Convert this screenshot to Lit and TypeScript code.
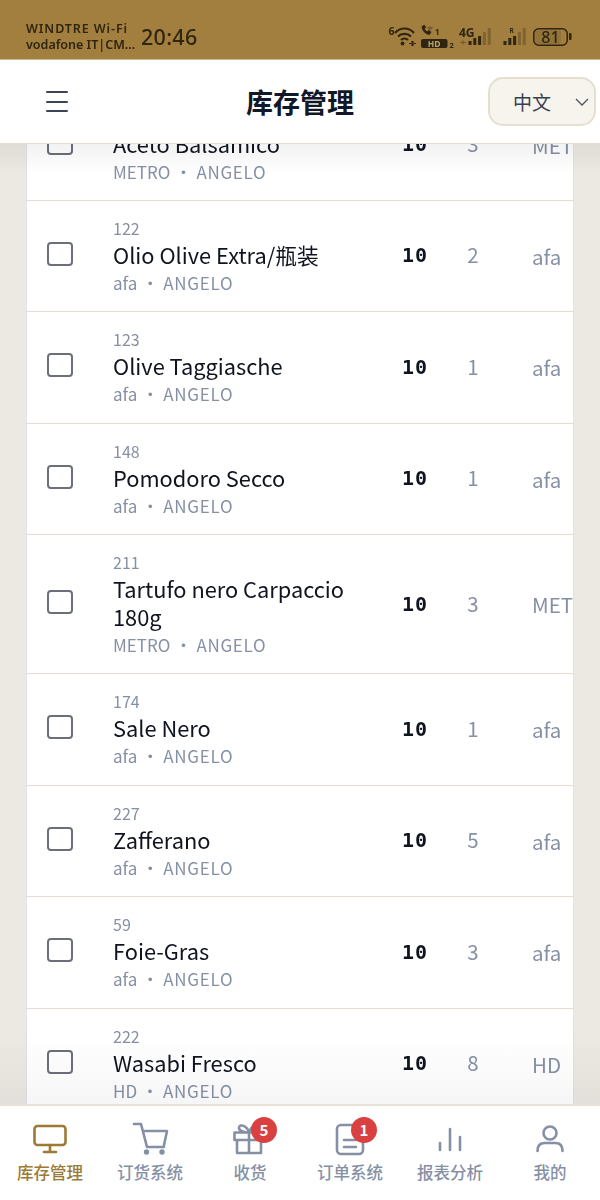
import { LitElement, html, css, svg } from "lit";
import { customElement } from "lit/decorators.js";

interface Item { id: string; name: string; qty: string; n: string; sup: string; }
const items: Item[] = [
  { id: "121", name: "Aceto Balsamico", qty: "10", n: "3", sup: "METRO" },
  { id: "122", name: "Olio Olive Extra/瓶装", qty: "10", n: "2", sup: "afa" },
  { id: "123", name: "Olive Taggiasche", qty: "10", n: "1", sup: "afa" },
  { id: "148", name: "Pomodoro Secco", qty: "10", n: "1", sup: "afa" },
  { id: "211", name: "Tartufo nero Carpaccio 180g", qty: "10", n: "3", sup: "METRO" },
  { id: "174", name: "Sale Nero", qty: "10", n: "1", sup: "afa" },
  { id: "227", name: "Zafferano", qty: "10", n: "5", sup: "afa" },
  { id: "59", name: "Foie-Gras", qty: "10", n: "3", sup: "afa" },
  { id: "222", name: "Wasabi Fresco", qty: "10", n: "8", sup: "HD" },
  { id: "230", name: "Tobiko", qty: "10", n: "2", sup: "HD" },
];

const navIcons = {
  monitor: svg`<rect x="1.500" y="4" width="31" height="19" rx="3"/><path d="M17 23v7M11 30h12"/>`,
  cart: svg`<path d="M1 2h7l6 23h17M10 9h24l-3 14"/><circle cx="13.500" cy="30" r="2.700" class="fill"/><circle cx="29" cy="30" r="2.700" class="fill"/>`,
  gift: svg`<path d="M1.500 10.500h29v7.500h-29zM4 18v13h24V18M16 10.500V31M16 10.500c-2-7-9-9-10-5-.7 3 5 5 10 5 5 0 10.700-2 10-5-1-4-8-2-10 5"/>`,
  doc: svg`<rect x="4" y="3" width="26" height="29" rx="4"/><path d="M11 18h12M11 25h12"/>`,
  bars: svg`<path d="M7 28v-7M17 28V7M27 28V15"/>`,
  user: svg`<circle cx="17" cy="11" r="6.500"/><path d="M4.500 29c0-6 3-8 7-8h11c4 0 7 2 7 8"/>`,
};

const nav: { icon: keyof typeof navIcons; label: string; badge?: string; active?: boolean }[] = [
  { icon: "monitor", label: "库存管理", active: true },
  { icon: "cart", label: "订货系统" },
  { icon: "gift", label: "收货", badge: "5" },
  { icon: "doc", label: "订单系统", badge: "1" },
  { icon: "bars", label: "报表分析" },
  { icon: "user", label: "我的" },
];

const DK = "#2f2510";
const levels = [4, 7, 9, 13, 17];
const signal = (x: number, lit: number) =>
  levels.map(
    (h, i) => svg`<rect x=${x + i * 4.8} y=${21 - h} width="3" height=${h} fill=${DK} fill-opacity=${i < lit ? 1 : 0.3}/>`
  );

@customElement("app-root")
export class AppRoot extends LitElement {
  static styles = css`
    :host {
      display: flex;
      flex-direction: column;
      width: 600px;
      height: 1200px;
      overflow: hidden;
      background: #ece8e2;
      font-family: "Noto Sans CJK SC", "Noto Sans", sans-serif;
    }
    .status {
      flex: 0 0 60px;
      box-sizing: border-box;
      background: #a27f3e;
      border-bottom: 1px solid #cdb98f;
      display: flex;
      align-items: center;
      padding: 14px 0 0 26px;
      color: #2f2510;
    }
    .carrier {
      font: 600 12.500px/16px "Noto Sans", sans-serif;
      width: 115px;
      white-space: nowrap;
    }
    .carrier span { letter-spacing: 0.9px; }
    .time {
      font: 500 21.500px/24px "Noto Sans", sans-serif;
      letter-spacing: 0.3px;
    }
    .sys {
      margin-left: auto;
      margin-right: 26px;
      display: block;
      flex: none;
    }
    .header {
      flex: 0 0 84px;
      box-sizing: border-box;
      background: #fff;
      border-bottom: 1px solid #e4ded2;
      display: grid;
      grid-template-columns: 200px auto 1fr;
      align-items: center;
      padding: 0 4px 0 46px;
      position: relative;
      z-index: 2;
    }
    .burger { display: flex; flex-direction: column; gap: 7.500px; width: 22px; }
    .burger i { display: block; height: 2px; background: #3b4558; border-radius: 1px; }
    .title { font-size: 27px; font-weight: 700; color: #111827; line-height: 36px; }
    .lang {
      justify-self: end;
      box-sizing: border-box;
      width: 108px;
      height: 49px;
      background: #f7f4ee;
      border: 2px solid #e6dfcf;
      border-radius: 15px;
      display: flex;
      align-items: center;
      justify-content: space-between;
      padding: 0 5px 0 23px;
      font-size: 19px;
      color: #374151;
    }
    .content { flex: 1; min-height: 0; position: relative; overflow: hidden; padding: 0 27px; }
    .card {
      margin-top: -54.500px;
      background: #fff;
      box-shadow: 1px 0 0 #e0e4ea, -1px 0 0 #e0e4ea;
    }
    .row {
      display: grid;
      grid-template-columns: 86px 289px 50px 42px 1fr;
      align-items: center;
      box-sizing: border-box;
      border-bottom: 1px solid #e4ded2;
      padding: 17px 0 14.400px;
    }
    .check {
      box-sizing: border-box;
      width: 26px;
      height: 24px;
      margin: 0 0 7px 20px;
      border: 2px solid #6b7078;
      border-radius: 4px;
      background: #fff;
    }
    .main { padding-right: 20px; }
    .id { font-size: 16px; line-height: 20px; color: #8690a5; }
    .name { font-size: 21.800px; line-height: 28px; margin-top: 3px; color: #0f1420; }
    .sub { font-size: 17px; line-height: 28px; color: #8690a5; display: flex; }
    .sub b { font-weight: 400; padding: 0 4.500px; }
    .sub .who { letter-spacing: 0.7px; }
    .qty { font: 700 20px/24px "DejaVu Sans Mono", monospace; letter-spacing: 1px; color: #0f1420; margin-bottom: 4px; }
    .n { font-size: 20.500px; color: #8690a5; text-align: center; margin-bottom: 6px; }
    .sup { font-size: 20.500px; color: #8690a5; padding-left: 38px; white-space: nowrap; overflow: hidden; margin-bottom: 3px; }
    .fade-top, .fade-bot { position: absolute; left: 0; right: 0; pointer-events: none; mix-blend-mode: multiply; }
    .fade-top { top: 0; height: 30px; background: linear-gradient(#f2f2f2, #ffffff); }
    .fade-bot { bottom: 0; height: 70px; background: linear-gradient(#ffffff, #f6f6f6); }
    .nav {
      flex: 0 0 96px;
      box-sizing: border-box;
      background: #fff;
      border-top: 2px solid #e8e3d9;
      display: grid;
      grid-template-columns: repeat(6, 1fr);
      padding-top: 16px;
      position: relative;
      z-index: 2;
    }
    .tab { display: flex; flex-direction: column; align-items: center; color: #8690a5; font-size: 16.500px; font-weight: 500; }
    .tab.active { color: #9c7a36; }
    .ic { position: relative; width: 34px; height: 34px; }
    .ic svg { display: block; fill: none; stroke: currentColor; stroke-width: 2.600; stroke-linecap: round; stroke-linejoin: round; overflow: visible; }
    .ic svg .fill { fill: currentColor; stroke: none; }
    .lbl { line-height: 20px; margin-top: 6px; white-space: nowrap; }
    .badge {
      position: absolute;
      top: -5px;
      left: 18px;
      width: 26px;
      height: 26px;
      border-radius: 50%;
      background: #d8413f;
      color: #fff;
      font-size: 15px;
      font-weight: 700;
      line-height: 25px;
      text-align: center;
    }
  `;

  render() {
    return html`
      <div class="status">
        <div class="carrier"><span>WINDTRE Wi-Fi</span><br />vodafone IT|CM...</div>
        <div class="time">20:46</div>
        <svg class="sys" width="186" height="26" viewBox="0 0 186 26" fill="none">
          <text x="0.500" y="11" font-family="Noto Sans" font-weight="700" font-size="10.500" fill=${DK}>6</text>
          <path d="M7 9c5-6 14-6 19 0M10 12.500c3.500-3.500 9.500-3.500 13 0M13 16c2-2 5-2 7 0" stroke=${DK} stroke-width="2.200"/>
          <circle cx="14.500" cy="19.500" r="1.900" fill=${DK}/>
          <path d="M21 19.500h2M26 19.500h2M24 17v5M25 17v5" stroke=${DK} stroke-width="1.200"/>
          <path d="M33.500 2.500c.5 4.500 3.500 7.500 8 8.500l2-3-3-2-1.200 1.500c-1.300-.8-2-1.600-2.600-3l1.500-1.200-2-2.500z" fill=${DK}/>
          <path d="M39 3.500c2-1.300 4-1.300 6 0l-3 3.500z" fill=${DK} fill-opacity=".35"/>
          <text x="47" y="10.500" font-family="Noto Sans" font-weight="700" font-size="8" fill=${DK}>1</text>
          <rect x="33" y="15" width="26.500" height="9" rx="2" fill=${DK}/>
          <text x="46.200" y="22.800" text-anchor="middle" font-family="Noto Sans" font-weight="700" font-size="8.500" fill="#b9a06c">HD</text>
          <text x="61.500" y="23.500" font-family="Noto Sans" font-weight="700" font-size="7.500" fill=${DK}>2</text>
          <text x="71" y="13" font-family="Noto Sans" font-weight="700" font-size="12" fill=${DK}>4G</text>
          <path d="M72 18.500h6M75 16.500v4" stroke=${DK} stroke-opacity=".4" stroke-width="1.200"/>
          ${signal(80.5, 3)}
          <text x="121.500" y="9" font-family="Noto Sans" font-weight="700" font-size="6.500" fill=${DK}>R</text>
          ${signal(115.5, 3)}
          <rect x="145.750" y="4.750" width="33.500" height="16.500" rx="5" stroke=${DK} stroke-width="1.500"/>
          <rect x="147" y="6" width="26" height="14" rx="3.500" fill=${DK} fill-opacity=".13"/>
          <rect x="181" y="9" width="2.500" height="7" rx="1" fill=${DK}/>
          <text x="162.500" y="18.800" text-anchor="middle" font-family="Noto Sans" font-weight="500" font-size="16" fill=${DK}>81</text>
        </svg>
      </div>
      <div class="header">
        <div class="burger"><i></i><i></i><i></i></div>
        <div class="title">库存管理</div>
        <div class="lang">
          <span>中文</span>
          <svg width="14" height="8" viewBox="0 0 14 8" fill="none"><path d="M1 1l6 6 6-6" stroke="#4b5563" stroke-width="1.300"/></svg>
        </div>
      </div>
      <div class="content">
        <div class="card">
          ${items.map(
            (it) => html`
              <div class="row">
                <div class="check"></div>
                <div class="main">
                  <div class="id">${it.id}</div>
                  <div class="name">${it.name}</div>
                  <div class="sub"><span>${it.sup}</span><b>•</b><span class="who">ANGELO</span></div>
                </div>
                <div class="qty">${it.qty}</div>
                <div class="n">${it.n}</div>
                <div class="sup">${it.sup}</div>
              </div>
            `
          )}
        </div>
        <div class="fade-top"></div>
        <div class="fade-bot"></div>
      </div>
      <div class="nav">
        ${nav.map(
          (t) => html`
            <div class="tab ${t.active ? "active" : ""}">
              <div class="ic">
                <svg width="34" height="34" viewBox="0 0 34 34">${navIcons[t.icon]}</svg>
                ${t.badge ? html`<div class="badge">${t.badge}</div>` : ""}
              </div>
              <div class="lbl">${t.label}</div>
            </div>
          `
        )}
      </div>
    `;
  }
}
